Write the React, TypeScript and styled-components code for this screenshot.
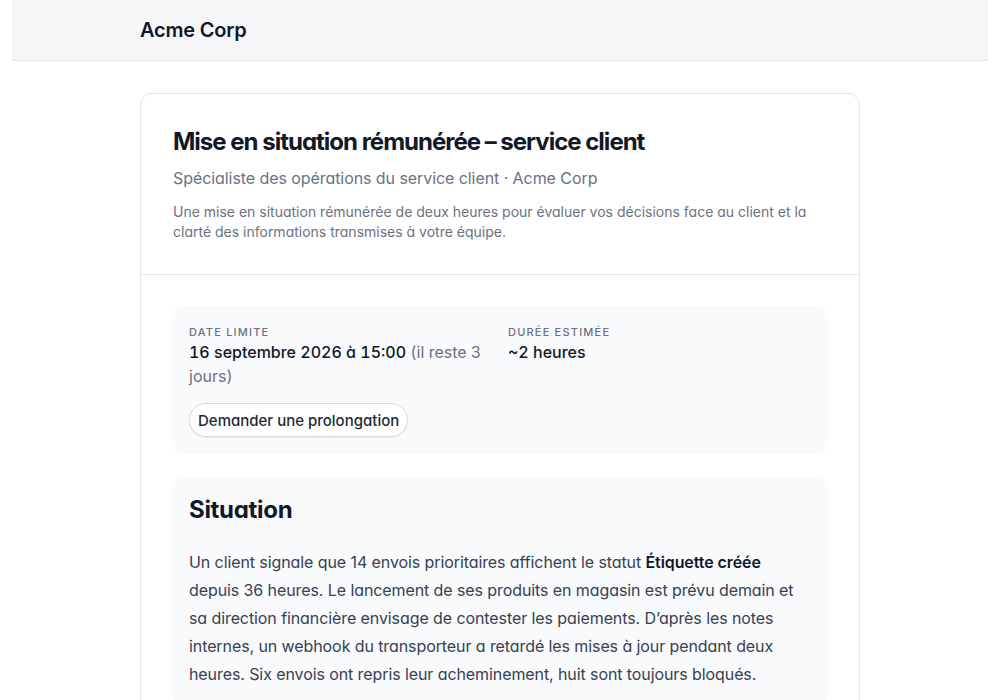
import * as React from 'react';
import styled, { createGlobalStyle } from 'styled-components';

const GlobalStyle = createGlobalStyle`
  html, body {
    margin: 0;
    padding: 0;
    background: #ffffff;
  }
  body {
    font-family: Inter, "Noto Sans", sans-serif;
    font-feature-settings: 'cv11';
    color: #111827;
    -webkit-font-smoothing: antialiased;
  }
  * {
    box-sizing: border-box;
  }
`;

const Page = styled.div`
  padding: 0 12px;
`;

const TopBar = styled.header`
  height: 61px;
  background: #f4f6f8;
  border-bottom: 1px solid #dfe2e6;
  display: flex;
  align-items: center;
`;

const Container = styled.div`
  width: 720px;
  margin: 0 auto;
`;

const Brand = styled.div`
  font-size: 20px;
  font-weight: 600;
  color: #111827;
  letter-spacing: -0.2px;
`;

const Main = styled(Container)`
  padding-top: 32px;
`;

const Card = styled.section`
  border: 1px solid #e5e7eb;
  border-radius: 12px;
  background: #ffffff;
  box-shadow: 0 1px 2px rgba(16, 24, 40, 0.03);
`;

const CardHeader = styled.div`
  padding: 32px;
  border-bottom: 1px solid #e5e7eb;
`;

const Title = styled.h1`
  margin: 0;
  font-size: 24px;
  line-height: 32px;
  font-weight: 700;
  letter-spacing: -1px;
  color: #111827;
`;

const Subtitle = styled.p`
  margin: 8px 0 0;
  font-size: 16px;
  line-height: 24px;
  letter-spacing: -0.07px;
  color: #6b7280;
`;

const Description = styled.p`
  margin: 12px 0 0;
  font-size: 14px;
  line-height: 20px;
  color: #6b7280;
`;

const CardBody = styled.div`
  padding: 32px;
  display: flex;
  flex-direction: column;
  gap: 26px;
`;

const Panel = styled.div<{ $top?: number }>`
  background: #f8fafc;
  border-radius: 10px;
  padding: ${(p) => p.$top ?? 16}px 16px 16px;
  box-shadow: 0 0 0 1px rgba(244, 246, 250, 0.7);
`;

const InfoGrid = styled.div`
  display: grid;
  grid-template-columns: 1fr 1fr;
  column-gap: 16px;
`;

const Label = styled.div`
  font-size: 11px;
  line-height: 16px;
  font-weight: 500;
  letter-spacing: 1.2px;
  text-transform: uppercase;
  color: #6b7280;
`;

const Value = styled.div`
  font-size: 16px;
  line-height: 24px;
  font-weight: 500;
  font-feature-settings: 'cv11', 'tnum';
  color: #111827;
`;

const Muted = styled.span`
  font-weight: 400;
  color: #6b7280;
`;

const PillButton = styled.button`
  margin-top: 15px;
  height: 34px;
  padding: 0 8px;
  border: 1px solid #d7dbe0;
  border-radius: 999px;
  background: #ffffff;
  font-family: inherit;
  font-feature-settings: 'cv11';
  font-size: 15px;
  font-weight: 500;
  color: #1f2937;
  box-shadow: 0 1px 2px rgba(16, 24, 40, 0.06);
  cursor: pointer;
`;

const SectionTitle = styled.h2`
  margin: 0 0 22px;
  font-size: 24px;
  line-height: 32px;
  font-weight: 700;
  letter-spacing: -0.3px;
  color: #111827;
`;

const Paragraph = styled.p`
  margin: 0;
  font-size: 16px;
  line-height: 28px;
  letter-spacing: -0.09px;
  color: #374151;

  strong {
    font-weight: 600;
    color: #111827;
  }
`;

export default function App() {
  return (
    <>
      <GlobalStyle />
      <Page>
        <TopBar>
          <Container>
            <Brand>Acme Corp</Brand>
          </Container>
        </TopBar>
        <Main>
          <Card>
            <CardHeader>
              <Title>Mise en situation rémunérée – service client</Title>
              <Subtitle>Spécialiste des opérations du service client · Acme Corp</Subtitle>
              <Description>
                Une mise en situation rémunérée de deux heures pour évaluer vos décisions face au client et la
                clarté des informations transmises à votre équipe.
              </Description>
            </CardHeader>
            <CardBody>
              <Panel $top={17}>
                <InfoGrid>
                  <div>
                    <Label>Date limite</Label>
                    <Value>
                      16 septembre 2026 à 15:00 <Muted>(il reste 3 jours)</Muted>
                    </Value>
                  </div>
                  <div>
                    <Label>Durée estimée</Label>
                    <Value>~2 heures</Value>
                  </div>
                </InfoGrid>
                <PillButton type="button">Demander une prolongation</PillButton>
              </Panel>
              <Panel $top={15}>
                <SectionTitle>Situation</SectionTitle>
                <Paragraph>
                  Un client signale que 14 envois prioritaires affichent le statut <strong>Étiquette créée</strong>{' '}
                  depuis 36 heures. Le lancement de ses produits en magasin est prévu demain et sa direction
                  financière envisage de contester les paiements. D’après les notes internes, un webhook du
                  transporteur a retardé les mises à jour pendant deux heures. Six envois ont repris leur
                  acheminement, huit sont toujours bloqués.
                </Paragraph>
              </Panel>
            </CardBody>
          </Card>
        </Main>
      </Page>
    </>
  );
}
